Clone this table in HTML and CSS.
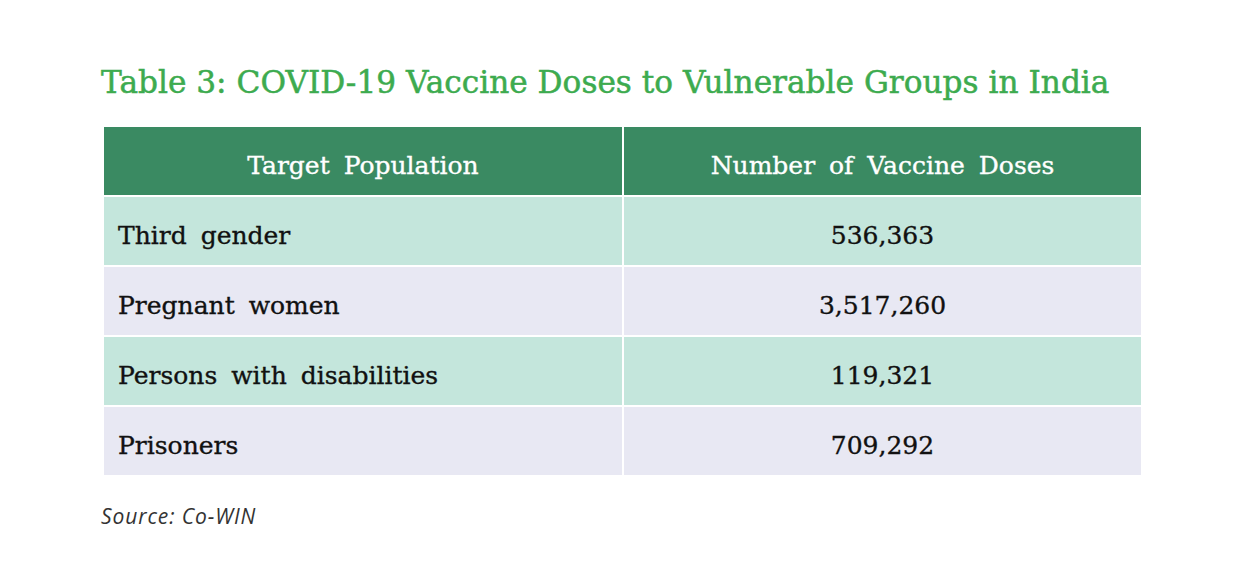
FILE: index.html
```html
<!DOCTYPE html>
<html lang="en">
<head>
<meta charset="utf-8">
<title>Table 3</title>
<link rel="stylesheet" href="styles.css">
</head>
<body>
<main class="page">
  <h1 class="title">Table 3: COVID-19 Vaccine Doses to Vulnerable Groups in India</h1>
  <div class="table">
    <div class="cell head">Target Population</div>
    <div class="cell head">Number of Vaccine Doses</div>
    <div class="cell mint label">Third gender</div>
    <div class="cell mint num">536,363</div>
    <div class="cell lav label">Pregnant women</div>
    <div class="cell lav num">3,517,260</div>
    <div class="cell mint label">Persons with disabilities</div>
    <div class="cell mint num">119,321</div>
    <div class="cell lav label">Prisoners</div>
    <div class="cell lav num">709,292</div>
  </div>
  <p class="source">Source: Co-WIN</p>
</main>
</body>
</html>
```

FILE: styles.css
```css
html, body {
  margin: 0;
  padding: 0;
  background: #ffffff;
}

.page {
  padding: 62px 0 0 101px;
}

.title {
  margin: 0;
  font-family: "DejaVu Serif", "Liberation Serif", serif;
  font-weight: normal;
  font-size: 31.2px;
  line-height: 40px;
  color: #3dab4f;
  -webkit-text-stroke: 0.5px #3dab4f;
  white-space: nowrap;
}

.table {
  display: grid;
  grid-template-columns: 518px 517px;
  grid-auto-rows: 68px;
  gap: 2px;
  margin: 25px 0 0 3px;
  width: 1037px;
}

.cell {
  display: flex;
  align-items: center;
  padding-top: 8px;
  box-sizing: border-box;
  font-family: "DejaVu Serif", "Liberation Serif", serif;
  font-size: 25px;
  word-spacing: 6px;
  color: #111111;
  -webkit-text-stroke: 0.35px #111111;
}

.head {
  justify-content: center;
  background: #3a8a62;
  color: #ffffff;
  -webkit-text-stroke: 0.35px #ffffff;
}

.mint {
  background: #c4e6dc;
}

.lav {
  background: #e8e8f3;
}

.label {
  padding-left: 14px;
}

.num {
  justify-content: center;
}

.source {
  margin: 27px 0 0 0;
  font-family: "Open Sans", "Noto Sans", sans-serif;
  font-style: italic;
  font-size: 21px;
  letter-spacing: 0.9px;
  color: #333333;
}
```
